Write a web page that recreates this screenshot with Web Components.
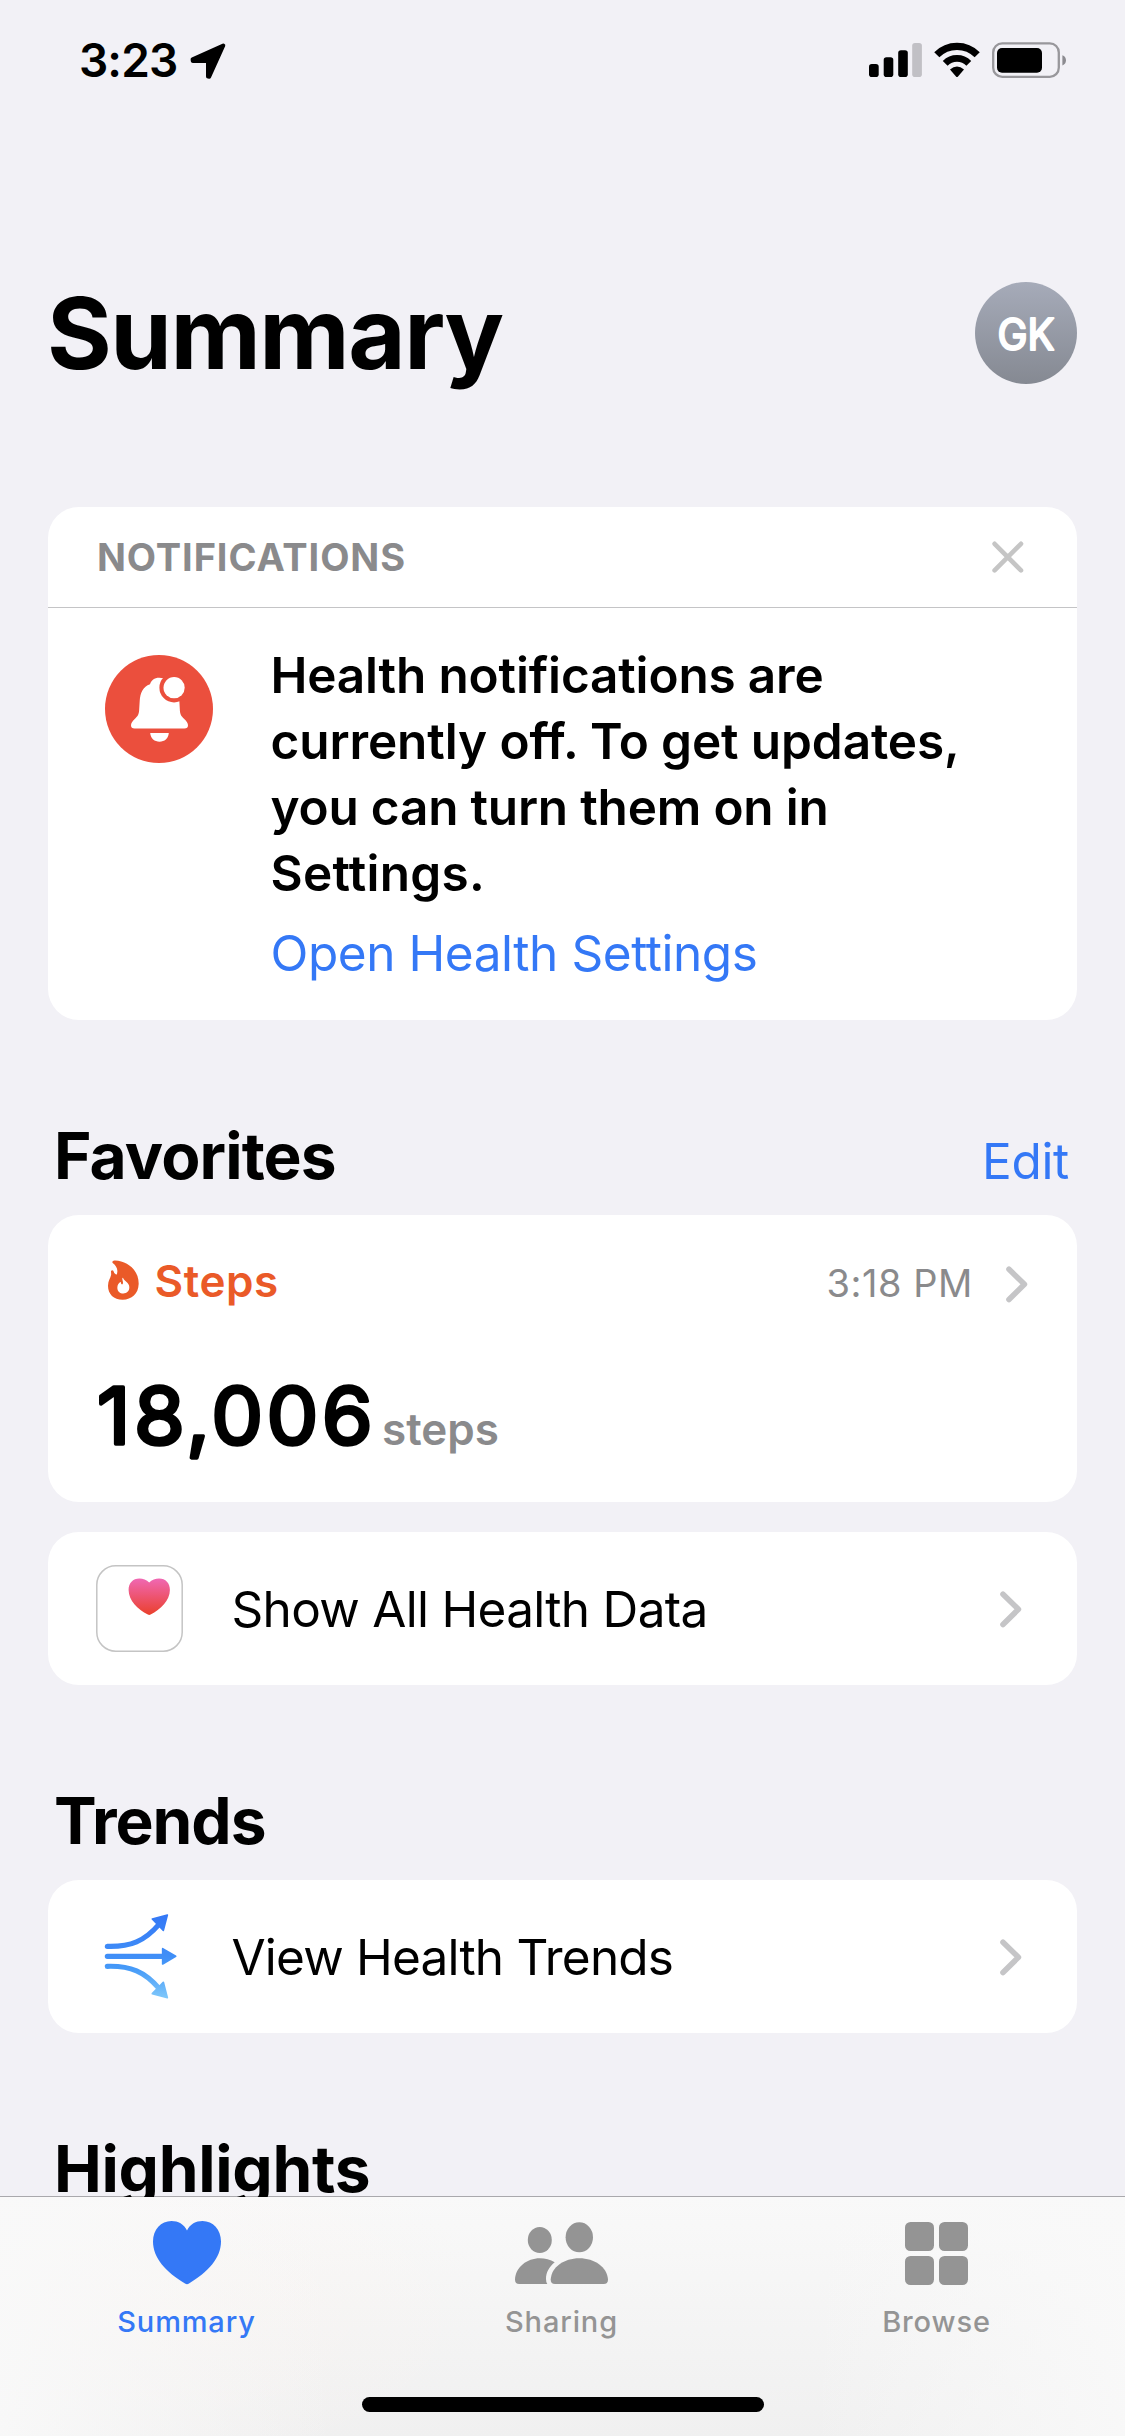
<!DOCTYPE html>
<html lang="en">
<head>
<meta charset="utf-8">
<title>Health Summary</title>
<style>
  :root {
    --bg: #f2f1f6;
    --blue: #3478f6;
    --gray: #8a8a8c;
    --faint: #c5c5c7;
  }
  body {
    margin: 0;
    background: var(--bg);
    color: #000;
    font-family: Inter, "Liberation Sans", sans-serif;
  }
</style>
</head>
<body>
<health-app>
  <status-bar slot="top">3:23</status-bar>
  <page-header initials="GK">Summary</page-header>

  <notice-card heading="NOTIFICATIONS" action="Open Health Settings">
    <span style="letter-spacing:-.16px">Health notifications are</span><br>
    <span style="letter-spacing:-.1px">currently off. To get updates,</span><br>
    <span style="letter-spacing:-.2px">you can turn them on in</span><br>
    <span style="letter-spacing:.28px">Settings.</span>
  </notice-card>

  <section-title>Favorites<span slot="action">Edit</span></section-title>
  <metric-card name="Steps" time="3:18 PM" value="18,006" unit="steps"></metric-card>
  <nav-row style="margin-top:30px;--tracking:-.7px"><hk-icon slot="icon" name="app"></hk-icon>Show All Health Data</nav-row>

  <section-title style="--tracking:-1.05px">Trends</section-title>
  <nav-row style="--tracking:-.8px"><hk-icon slot="icon" name="trends"></hk-icon>View Health Trends</nav-row>

  <section-title style="--tracking:-.3px">Highlights</section-title>

  <tab-bar slot="tabs">
    <tab-item active label="Summary"><hk-icon name="heart"></hk-icon></tab-item>
    <tab-item label="Sharing"><hk-icon name="people"></hk-icon></tab-item>
    <tab-item label="Browse"><hk-icon name="grid"></hk-icon></tab-item>
  </tab-bar>
</health-app>

<script>
const ICONS = {
  arrow: `<svg width="36" height="36" viewBox="0 0 36 36"><path d="M33.3 2.5 2.6 16.4 2.8 18 18 18 18 33.6 19.2 33.7Z" fill="#000" stroke="#000" stroke-width="4" stroke-linejoin="round"/></svg>`,
  cell: `<svg width="53" height="36" viewBox="0 0 53 36"><rect x="0" y="22" width="9.7" height="13" rx="2.8"/><rect x="14.7" y="15.3" width="9.6" height="19.7" rx="2.8"/><rect x="29.2" y="8.3" width="9.6" height="26.7" rx="2.8"/><rect x="43.2" y="1" width="9.7" height="34" rx="2.8" fill="#c1c0c5"/></svg>`,
  wifi: `<svg width="46" height="36" viewBox="0 0 46 36"><g fill="none" stroke="#000"><path d="M2.8 12.8A28.4 28.4 0 0 1 43.2 12.8" stroke-width="7.2"/><path d="M11.2 21.3A16.6 16.6 0 0 1 34.8 21.3" stroke-width="6.8"/></g><path d="M16 27.6Q23 21.4 30 27.6L23.8 34.7Q23 35.4 22.2 34.7Z"/></svg>`,
  battery: `<svg width="75" height="36" viewBox="0 0 75 36"><rect x="1.2" y="1.4" width="65.6" height="33.4" rx="9" fill="none" stroke="#98979b" stroke-width="2.3"/><rect x="5" y="6" width="45" height="24.8" rx="5"/><path d="M70.4 13.2Q74 14.6 74 18.3T70.4 23.5Z" fill="#8c8b90"/></svg>`,
  close: `<svg width="32" height="32" viewBox="0 0 32 32"><path d="M2.6 2.8 29 29.4M29 2.8 2.6 29.4" stroke="#c5c5c5" stroke-width="4.6" stroke-linecap="round"/></svg>`,
  chevron: `<svg width="22" height="37" viewBox="0 0 22 37"><path d="M3 3.3 18.4 18.3 3 33.5" fill="none" stroke="#c5c5c7" stroke-width="5.6" stroke-linecap="round" stroke-linejoin="round"/></svg>`,
  bell: `<svg width="108" height="108" viewBox="0 0 108 108"><circle cx="54" cy="54" r="54" fill="#eb4f3d"/><path fill="#fff" d="M54.3 22.8C49 22.8 46.5 25.5 45 29.2C38 31.5 35.2 38 34.7 46L34.2 54C34 59.5 32.8 61 30 63.7C27.3 66.4 26 68 26 70.2Q26 73.5 29.6 73.5H79.4Q83 73.5 83 70.2C83 68 81.700 66.400 79 63.700C76.200 61 75 59.500 74.800 54L74 40L66 26Q60 22.800 54.300 22.800Z"/><path fill="#fff" d="M45.200 78H63.800C63.300 83.500 59.500 86.700 54.500 86.700S45.700 83.500 45.200 78Z"/><circle cx="69.100" cy="32.700" r="14.700" fill="#eb4f3d"/><circle cx="69.100" cy="32.700" r="10.600" fill="#fff"/></svg>`,
  flame: `<svg width="31" height="40" viewBox="53 61 93 120"><path fill="#ea5a28" d="M66 67Q66 62 74 62.500C112 64 146 92 145 133C144 163 124 180 97 180C70 180 53 163 53 138C53 124 61 114 62 107C63 103 62 98 62 95Q64 90 69 93Q70 101 78 105Q81 102 81 96C82 88 76 76 68 71Q66 69 66 67Z"/><path fill="#fff" d="M98 114C101 125 117 127 117 143C117 155 109 161.500 99 161.500C89 161.500 81 155 81 144C81 136 85 131 90 127Q92 126 92.500 132Q96 137 98 131C99 126 95 120 96 115Z"/></svg>`,
  app: `<svg width="87" height="87" viewBox="0 0 87 87"><defs><linearGradient id="g" x1="0" y1="0" x2="0" y2="1"><stop offset="0" stop-color="#f068b4"/><stop offset="1" stop-color="#ea402c"/></linearGradient></defs><rect x=".8" y=".8" width="85.400" height="85.400" rx="19" fill="#fff" stroke="#c4c4c4" stroke-width="1.500"/><path transform="translate(32.600 13.500)" fill="url(#g)" d="M20.600 4C23 1.500 27 0 30.500 0C37 0 41.300 4.500 41.300 11.500C41.300 22 32 31 22 36Q20.600 36.800 19.300 36C9 31 0 22 0 11.500C0 4.500 4.300 0 10.800 0C14.300 0 18 1.500 20.600 4Z"/></svg>`,
  trends: `<svg width="87" height="122.667" viewBox="18 0 261 368"><defs><linearGradient id="t" gradientUnits="userSpaceOnUse" x1="0" y1="60" x2="0" y2="310"><stop offset="0" stop-color="#3478f6"/><stop offset=".5" stop-color="#408ff7"/><stop offset=".65" stop-color="#479bf8"/><stop offset="1" stop-color="#80c8fa"/></linearGradient></defs><g fill="none" stroke="url(#t)" stroke-width="15.500" stroke-linecap="round"><path d="M52 154C122 156 164 138 207 88"/><path d="M52 184.010L216 184"/><path d="M52 214C122 212 164 230 207 280"/></g><g fill="url(#t)" stroke="url(#t)" stroke-width="5" stroke-linejoin="round"><path d="M232 60 187 72 220 106Z"/><path d="M218 161 257 184 218 207Z"/><path d="M232 308 187 296 220 262Z"/></g></svg>`,
  heart: `<svg width="68" height="64" viewBox="0 0 68 64"><path fill="currentColor" d="M34 9.500C37 3 43 0 49.500 0C60 0 68 8.500 68 20.500C68 37 55 51 36 62.500Q34 64 32 62.500C13 51 0 37 0 20.500C0 8.500 8 0 18.500 0C25 0 31 3 34 9.500Z"/></svg>`,
  people: `<svg width="93" height="62" viewBox="0 0 93 62"><g fill="currentColor"><ellipse cx="24.800" cy="18" rx="12" ry="13"/><ellipse cx="64.300" cy="15.300" rx="13.700" ry="15"/><path d="M40 62Q35.700 62 35.700 57.500C36.500 45 49 36.300 64.300 36.300S92 45 93 57.500Q93 62 88.700 62Z"/><path d="M4.300 62Q0 62 0 57.500C.8 45 12 36.300 24.800 36.300C30 36.300 35.500 37.700 39.700 40.300C34 45 31 50.500 31 57Q31 60 32.300 62Z"/></g></svg>`,
  grid: `<svg width="63" height="63" viewBox="0 0 63 63"><g fill="currentColor"><rect width="29" height="29" rx="5.500"/><rect x="34" width="29" height="29" rx="5.500"/><rect y="34" width="29" height="29" rx="5.500"/><rect x="34" y="34" width="29" height="29" rx="5.500"/></g></svg>`
};

const define = (name, render) => customElements.define(name, class extends HTMLElement {
  constructor() {
    super();
    this.attachShadow({ mode: "open" });
  }
  connectedCallback() {
    this.shadowRoot.innerHTML = render(this);
  }
});
const attr = (el, name) => el.getAttribute(name) || "";

define("hk-icon", el => `
  <style>:host{display:block;flex:none} svg{display:block}</style>
  ${ICONS[attr(el, "name")]}`);

define("health-app", () => `
  <style>
    :host{display:flex;flex-direction:column;height:2436px;overflow:hidden}
    main{flex:none;height:2077px;overflow:hidden}
  </style>
  <slot name="top"></slot><main><slot></slot></main><slot name="tabs"></slot>`);

define("status-bar", () => `
  <style>
    :host{display:flex;align-items:center;flex:none;height:120px;box-sizing:border-box;padding:0 58px 0 79px}
    time{width:111px;font-size:46px;font-weight:600;line-height:120px;letter-spacing:-.9px}
    .icons{display:flex;gap:12px;margin-left:auto}
  </style>
  <time><slot></slot></time><hk-icon name="arrow" style="margin-top:2px"></hk-icon>
  <div class="icons"><hk-icon name="cell"></hk-icon><hk-icon name="wifi"></hk-icon><hk-icon name="battery"></hk-icon></div>`);

define("page-header", el => `
  <style>
    :host{display:flex;justify-content:space-between;padding:162px 48px 0 47px;margin-bottom:123px}
    h1{margin:0;font-size:99px;line-height:102px;font-weight:700;letter-spacing:-1.5px}
    .avatar{width:102px;height:102px;border-radius:50%;background:linear-gradient(#a6abb9,#858992)}
    text{font-size:43.500px;font-weight:400;fill:#fff;stroke:#fff;stroke-width:2.200px;stroke-linejoin:round;text-anchor:middle}
  </style>
  <h1><slot></slot></h1>
  <div class="avatar"><svg width="102" height="102" viewBox="0 0 102 102"><text x="51" y="68" textLength="57" lengthAdjust="spacingAndGlyphs">${attr(el, "initials")}</text></svg></div>`);

define("health-card", () => `
  <style>:host{display:block;margin:0 48px;border-radius:31px;background:#fff;overflow:hidden}</style>
  <slot></slot>`);

define("notice-card", el => `
  <style>
    :host{display:block}
    header{display:flex;align-items:center;justify-content:space-between;height:100px;padding:0 53px 0 49px;border-bottom:1px solid #c4c4c6}
    h2{margin:0;font-size:38px;font-weight:700;letter-spacing:.9px;color:var(--gray)}
    .body{display:flex;padding:34px 40px 34px 57px}
    .body hk-icon{margin-top:13px}
    .text{margin-left:57.500px;font-size:49.500px;line-height:66px}
    p{margin:0;font-weight:600;white-space:nowrap}
    a{display:block;margin-top:14px;color:var(--blue);letter-spacing:-.44px}
  </style>
  <health-card>
    <header><h2>${attr(el, "heading")}</h2><hk-icon name="close"></hk-icon></header>
    <div class="body"><hk-icon name="bell"></hk-icon>
      <div class="text"><p><slot></slot></p><a>${attr(el, "action")}</a></div>
    </div>
  </health-card>`);

define("section-title", () => `
  <style>
    :host{display:flex;align-items:baseline;justify-content:space-between;height:80px;padding:96px 56px 19px 54px}
    h2{margin:0;font-size:64px;line-height:80px;font-weight:700;letter-spacing:var(--tracking,-.88px)}
    ::slotted([slot=action]){font-size:49.500px;letter-spacing:-.3px;color:var(--blue)}
  </style>
  <h2><slot></slot></h2><slot name="action"></slot>`);

define("metric-card", el => `
  <style>
    :host{display:block}
    .top{display:flex;align-items:center;height:60px;padding:37px 49px 0 60px}
    .name{margin:-2px auto 0 15.500px;font-size:44px;font-weight:600;letter-spacing:.6px;color:#ea5a28}
    .top hk-icon[name=flame]{margin-top:-4px}
    time{margin:2px 33px 0 0;font-size:38px;letter-spacing:.55px;color:var(--gray)}
    .top hk-icon[name=chevron]{margin-top:4px}
    .value{display:flex;height:90px;padding:58px 0 42px 48px}
    svg{flex:none;margin:-20px 0 -20px}
    text{font-size:79px;font-weight:400;letter-spacing:3.300px;stroke:#000;stroke-width:3.500px;stroke-linejoin:round;stroke-linecap:round}
    .unit{padding-top:14px;line-height:90px;font-size:44px;font-weight:600;color:var(--gray)}
  </style>
  <health-card>
    <div class="top"><hk-icon name="flame"></hk-icon><span class="name">${attr(el, "name")}</span><time>${attr(el, "time")}</time><hk-icon name="chevron"></hk-icon></div>
    <div class="value"><svg width="286" height="130" viewBox="0 0 286 130"><text x="1" y="94" transform="scale(1.040 1)">${attr(el, "value")}</text></svg><span class="unit">${attr(el, "unit")}</span></div>
  </health-card>`);

define("nav-row", () => `
  <style>
    :host{display:block}
    .row{display:flex;align-items:center;height:153px;padding:0 55px 0 48px}
    .label{margin:0 auto 0 48.500px;font-size:49.500px;line-height:66px;letter-spacing:var(--tracking)}
    hk-icon{margin-top:2px}
  </style>
  <health-card><div class="row"><slot name="icon"></slot><span class="label"><slot></slot></span><hk-icon name="chevron"></hk-icon></div></health-card>`);

define("tab-bar", () => `
  <style>
    :host{display:flex;flex-direction:column;justify-content:space-between;position:relative;box-sizing:border-box;height:240px;margin-top:-1px;border-top:1px solid rgba(0,0,0,.3);background-clip:padding-box;
      background-image:linear-gradient(90deg,rgba(249,249,249,.9),rgba(249,249,249,0) 30%,rgba(249,249,249,0) 72%,rgba(249,249,249,.9)),radial-gradient(300px 160px at 190px 110px,rgba(255,244,238,.3),rgba(255,244,238,0)),linear-gradient(#f9f9f9,#f0f0f0)}
    nav{display:grid;grid-template-columns:repeat(3,1fr);padding:22px 1px 0 0;margin-left:-1px}
    i{align-self:center;width:402px;height:15px;margin-bottom:24px;border-radius:8px;background:#000}
  </style>
  <nav><slot></slot></nav><i></i>`);

define("tab-item", el => `
  <style>
    :host{display:flex;flex-direction:column;align-items:center;color:#949494}
    :host([active]){color:var(--blue)}
    .icon{display:flex;align-items:center;height:68px}
    span{margin-top:16px;font-size:29px;line-height:37px;font-weight:500;letter-spacing:.86px}
  </style>
  <div class="icon"><slot></slot></div><span>${attr(el, "label")}</span>`);
</script>
</body>
</html>
